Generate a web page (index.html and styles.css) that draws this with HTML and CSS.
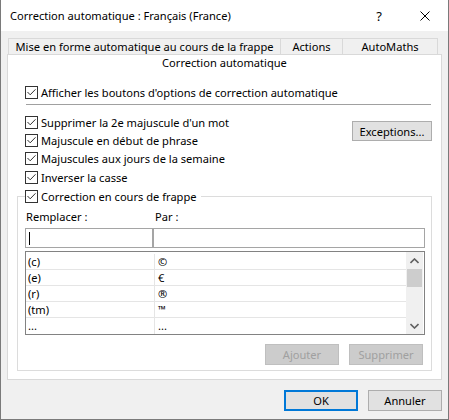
FILE: index.html
```html
<!DOCTYPE html>
<html lang="fr">
<head>
    <meta charset="UTF-8">
    <title>Correction automatique : Français (France)</title>
    <link rel="stylesheet" href="styles.css">
</head>
<body>
    <div class="window">
        <div class="titlebar">
            <span class="title">Correction automatique : Français (France)</span>
            <span class="caption-btn">?</span>
            <span class="caption-btn">
                <svg width="10" height="10" viewBox="0 0 10 10"><path d="M0.5 0.5 L9.5 9.5 M9.5 0.5 L0.5 9.5" stroke="#000" stroke-width="1" fill="none"/></svg>
            </span>
        </div>
        <div class="client">
            <div class="tabrow">
                <div class="tab tab-format">Mise en forme automatique au cours de la frappe</div>
                <div class="tab tab-actions">Actions</div>
                <div class="tab tab-maths">AutoMaths</div>
            </div>
            <div class="panel">
                <div class="tab-current">Correction automatique</div>

                <div class="check first">
                    <span class="cb"><svg width="11" height="11" viewBox="0 0 11 11"><polyline points="1.5,5 4.2,7.8 9.5,2.3" fill="none" stroke="#333" stroke-width="1"/></svg></span>
                    <span>Afficher les boutons d'options de correction automatique</span>
                </div>
                <div class="sep"></div>

                <div class="options">
                    <div class="checks">
                        <div class="check">
                            <span class="cb"><svg width="11" height="11" viewBox="0 0 11 11"><polyline points="1.5,5 4.2,7.8 9.5,2.3" fill="none" stroke="#333" stroke-width="1"/></svg></span>
                            <span>Supprimer la 2e majuscule d'un mot</span>
                        </div>
                        <div class="check">
                            <span class="cb"><svg width="11" height="11" viewBox="0 0 11 11"><polyline points="1.5,5 4.2,7.8 9.5,2.3" fill="none" stroke="#333" stroke-width="1"/></svg></span>
                            <span>Majuscule en début de phrase</span>
                        </div>
                        <div class="check">
                            <span class="cb"><svg width="11" height="11" viewBox="0 0 11 11"><polyline points="1.5,5 4.2,7.8 9.5,2.3" fill="none" stroke="#333" stroke-width="1"/></svg></span>
                            <span>Majuscules aux jours de la semaine</span>
                        </div>
                        <div class="check last">
                            <span class="cb"><svg width="11" height="11" viewBox="0 0 11 11"><polyline points="1.5,5 4.2,7.8 9.5,2.3" fill="none" stroke="#333" stroke-width="1"/></svg></span>
                            <span>Inverser la casse</span>
                        </div>
                    </div>
                    <button class="btn btn-exc">Exceptions...</button>
                </div>

                <fieldset class="group">
                    <legend class="check">
                        <span class="cb"><svg width="11" height="11" viewBox="0 0 11 11"><polyline points="1.5,5 4.2,7.8 9.5,2.3" fill="none" stroke="#333" stroke-width="1"/></svg></span>
                        <span>Correction en cours de frappe</span>
                    </legend>
                    <div class="labels">
                        <span class="lbl-replace">Remplacer :</span>
                        <span>Par :</span>
                    </div>
                    <div class="inputs">
                        <div class="field field-replace"><span class="caret"></span></div>
                        <div class="field field-with"></div>
                    </div>
                    <div class="list">
                        <div class="rows">
                            <div class="row"><span class="col-a">(c)</span><span class="col-b">©</span></div>
                            <div class="row"><span class="col-a">(e)</span><span class="col-b">€</span></div>
                            <div class="row"><span class="col-a">(r)</span><span class="col-b">®</span></div>
                            <div class="row"><span class="col-a">(tm)</span><span class="col-b tm">™</span></div>
                            <div class="row"><span class="col-a">...</span><span class="col-b">...</span></div>
                        </div>
                        <div class="scrollbar">
                            <span class="arrow"><svg width="9" height="6" viewBox="0 0 9 6"><polyline points="0.5,5 4.5,1 8.5,5" fill="none" stroke="#606060" stroke-width="1.6"/></svg></span>
                            <span class="thumb"></span>
                            <span class="track"></span>
                            <span class="arrow"><svg width="9" height="6" viewBox="0 0 9 6"><polyline points="0.5,1 4.5,5 8.5,1" fill="none" stroke="#606060" stroke-width="1.6"/></svg></span>
                        </div>
                    </div>
                    <div class="group-actions">
                        <button class="btn" disabled>Ajouter</button>
                        <button class="btn" disabled>Supprimer</button>
                    </div>
                </fieldset>
            </div>
            <div class="footer">
                <button class="btn btn-default">OK</button>
                <button class="btn">Annuler</button>
            </div>
        </div>
    </div>
</body>
</html>
```

FILE: styles.css
```css
* {
    box-sizing: border-box;
}
body {
    margin: 0;
    font-family: "Noto Sans", "Open Sans", sans-serif;
    font-size: 11.1px;
    color: #000;
    background: #fff;
}
.window {
    width: 449px;
    height: 420px;
    border: 1px solid #7a7a7a;
    border-top: none;
    background: #f0f0f0;
    display: flex;
    flex-direction: column;
}
.titlebar {
    height: 31px;
    flex: none;
    background: #fff;
    display: flex;
    align-items: center;
    padding-left: 9px;
}
.title {
    flex: 1;
}
.caption-btn {
    width: 46px;
    height: 31px;
    display: flex;
    align-items: center;
    justify-content: center;
    font-size: 13px;
}
.client {
    flex: 1;
    padding: 7px 6px 0 6px;
}
.tabrow {
    display: flex;
    margin-left: 1px;
    height: 16px;
}
.tab {
    border: 1px solid #d9d9d9;
    border-bottom: none;
    line-height: 15px;
    text-align: center;
    white-space: nowrap;
}
.tab + .tab {
    border-left: none;
}
.tab-format {
    width: 273px;
}
.tab-actions {
    width: 62px;
}
.tab-maths {
    width: 95px;
}
.panel {
    height: 326px;
    border: 1px solid #d9d9d9;
    background: #fff;
}
.tab-current {
    height: 16px;
    line-height: 16px;
    text-align: center;
}
.check {
    display: flex;
    align-items: center;
    gap: 3px;
    height: 18px;
    white-space: nowrap;
}
.cb {
    width: 13px;
    height: 13px;
    border: 1px solid #333;
    background: #fff;
    display: flex;
    flex: none;
}
.first {
    margin: 12px 0 0 17px;
}
.sep {
    margin: 3px 0 0 18px;
    width: 405px;
    height: 1px;
    background: #a0a0a0;
}
.options {
    display: flex;
    justify-content: space-between;
    align-items: flex-start;
    margin: 8px 9px 0 17px;
}
.last {
    margin-top: 1px;
}
.btn {
    font-family: inherit;
    font-size: 11.1px;
    color: #000;
    background: #e1e1e1;
    border: 1px solid #adadad;
    width: 74px;
    height: 21px;
    padding: 0;
    margin: 0;
}
.btn:disabled {
    background: #cccccc;
    border-color: #bfbfbf;
    color: #a0a0a0;
}
.btn-exc {
    margin-top: 8px;
    width: 80px;
    height: 20px;
}
.btn-default {
    border: 2px solid #0078d7;
}
.group {
    margin: 1px 9px 0 9px;
    border: 1px solid #dcdcdc;
    padding: 0 0 5px 0;
    min-width: 0;
}
.group legend {
    margin-left: 7px;
    padding: 0 4px 0 0;
}
.labels {
    display: flex;
    margin: 4px 0 0 8px;
    height: 16px;
    line-height: 16px;
}
.lbl-replace {
    width: 129px;
}
.inputs {
    display: flex;
    margin: 3px 0 0 7px;
}
.field {
    height: 20px;
    border: 1px solid #a5a5a5;
    background: #fff;
}
.field-replace {
    width: 128px;
    padding: 3px 0 0 3px;
}
.field-with {
    width: 272px;
}
.caret {
    display: block;
    width: 1px;
    height: 13px;
    background: #000;
}
.list {
    display: flex;
    margin: 3px 0 0 7px;
    width: 400px;
    height: 84px;
    border: 1px solid #828282;
    background: #fff;
}
.rows {
    flex: 1;
    padding-top: 2px;
}
.row {
    display: flex;
    height: 16px;
    line-height: 15px;
    border-bottom: 1px solid #e5e5e5;
}
.row:last-child {
    border-bottom: none;
}
.col-a {
    width: 129px;
    padding-left: 2px;
    border-right: 1px solid #e5e5e5;
}
.col-b {
    padding-left: 3px;
}
.tm {
    font-size: 10px;
}
.scrollbar {
    width: 17px;
    margin-right: 1px;
    background: #f0f0f0;
    display: flex;
    flex-direction: column;
    align-items: center;
}
.arrow {
    height: 17px;
    width: 17px;
    display: flex;
    align-items: center;
    justify-content: center;
}
.thumb {
    width: 15px;
    height: 18px;
    background: #cdcdcd;
}
.track {
    flex: 1;
}
.group-actions {
    display: flex;
    justify-content: flex-end;
    gap: 10px;
    margin: 9px 8px 0 0;
}
.footer {
    display: flex;
    justify-content: flex-end;
    gap: 10px;
    margin-top: 10px;
}
```
